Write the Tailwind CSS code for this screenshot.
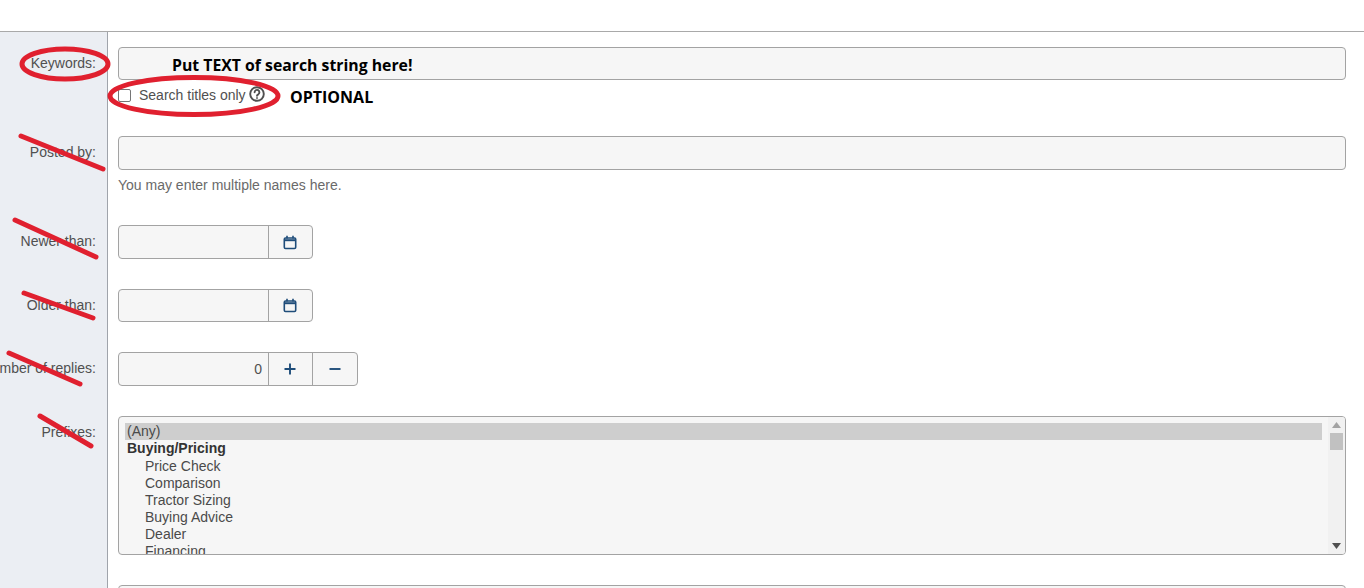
<!DOCTYPE html>
<html>
<head>
<meta charset="utf-8">
<script src="https://cdn.jsdelivr.net/npm/@tailwindcss/browser@4"></script>
</head>
<body class="bg-white font-['Liberation_Sans',Arial,sans-serif] text-[14px] text-[#505050]">
<div class="relative h-[588px] w-[1364px] overflow-hidden">
  <div class="h-[32px] border-b border-[#a9a9a9]"></div>
  <div class="flex h-[556px]">
    <div class="w-[108px] shrink-0 border-r border-[#a0a4ab] bg-[#ebeef3]"></div>
    <div class="min-w-0 flex-1"></div>
  </div>

  <div class="absolute left-0 top-[32px] w-[1346px]">
    <div class="grid grid-cols-[107px_1fr] pt-[15px]">
      <div class="flex justify-end whitespace-nowrap pr-[11px] pt-[8px] leading-[16px]">Keywords:</div>
      <div class="ml-[11px]">
        <div class="h-[33px] rounded-[4px] border border-[#a3a3a3] bg-[#f6f6f6]"></div>
        <label class="mt-[6px] flex h-[18px] items-center">
          <span class="h-[13px] w-[13px] rounded-[2px] border border-[#767676] bg-white"></span>
          <span class="ml-[8px]">Search titles only</span>
          <svg class="ml-[3px] -mt-[2px]" width="16" height="16" viewBox="0 0 16 16" fill="none" stroke="#505050" stroke-width="1.9"><circle cx="8" cy="8" r="6.8"/><path d="M5.6 6.3a2.4 2.4 0 1 1 3.7 2c-.9.5-1.300.9-1.300 1.500" stroke-linecap="round"/><circle cx="8" cy="12" r=".5" fill="#505050" stroke-width="1"/></svg>
        </label>
      </div>
    </div>

    <div class="grid grid-cols-[107px_1fr] pt-[32px]">
      <div class="flex justify-end whitespace-nowrap pr-[11px] pt-[8px] leading-[16px]">Posted by:</div>
      <div class="ml-[11px]">
        <div class="h-[34px] rounded-[4px] border border-[#a3a3a3] bg-[#f6f6f6]"></div>
        <div class="mt-[7px] leading-[16px] text-[#6a6a6a]">You may enter multiple names here.</div>
      </div>
    </div>

    <div class="grid grid-cols-[107px_1fr] pt-[32px]">
      <div class="flex justify-end whitespace-nowrap pr-[11px] pt-[8px] leading-[16px]">Newer than:</div>
      <div class="ml-[11px] flex h-[34px] w-[195px] rounded-[4px] border border-[#a3a3a3] bg-[#f6f6f6]">
        <div class="w-[150px] border-r border-[#a3a3a3]"></div>
        <div class="flex flex-1 items-center justify-center pr-[2px]">
          <svg width="14" height="15" viewBox="0 0 14 15" fill="none" stroke="#1f4d7a" stroke-width="1.6"><rect x="1.3" y="3" width="11.4" height="10.500" rx="1.200"/><path d="M1.300 5.200h11.400" stroke-width="2"/><path d="M4 .8v2.600M10 .8v2.600"/></svg>
        </div>
      </div>
    </div>

    <div class="grid grid-cols-[107px_1fr] pt-[30px]">
      <div class="flex justify-end whitespace-nowrap pr-[11px] pt-[8px] leading-[16px]">Older than:</div>
      <div class="ml-[11px] flex h-[33px] w-[195px] rounded-[4px] border border-[#a3a3a3] bg-[#f6f6f6]">
        <div class="w-[150px] border-r border-[#a3a3a3]"></div>
        <div class="flex flex-1 items-center justify-center pr-[2px]">
          <svg width="14" height="15" viewBox="0 0 14 15" fill="none" stroke="#1f4d7a" stroke-width="1.6"><rect x="1.3" y="3" width="11.4" height="10.500" rx="1.200"/><path d="M1.300 5.200h11.400" stroke-width="2"/><path d="M4 .8v2.600M10 .8v2.600"/></svg>
        </div>
      </div>
    </div>

    <div class="grid grid-cols-[107px_1fr] pt-[30px]">
      <div class="flex justify-end whitespace-nowrap pr-[11px] pt-[8px] leading-[16px]">Number of replies:</div>
      <div class="ml-[11px] flex h-[34px] w-[240px] rounded-[4px] border border-[#a3a3a3] bg-[#f6f6f6]">
        <div class="flex w-[150px] items-center justify-end border-r border-[#a3a3a3] pr-[6px]">0</div>
        <div class="flex w-[44px] items-center justify-center border-r border-[#a3a3a3] pr-[2px]">
          <svg width="12" height="12" viewBox="0 0 12 12" stroke="#1f4d7a" stroke-width="1.9"><path d="M6 .5v11M.5 6h11"/></svg>
        </div>
        <div class="flex flex-1 items-center justify-center">
          <svg width="12" height="12" viewBox="0 0 12 12" stroke="#1f4d7a" stroke-width="1.9"><path d="M.5 6h11"/></svg>
        </div>
      </div>
    </div>

    <div class="grid grid-cols-[107px_1fr] pt-[30px]">
      <div class="flex justify-end whitespace-nowrap pr-[11px] pt-[8px] leading-[16px]">Prefixes:</div>
      <div class="ml-[11px] flex h-[139px] overflow-hidden rounded-[4px] border border-[#a3a3a3] bg-[#f6f6f6]">
        <div class="min-w-0 flex-1 overflow-hidden pl-[6px] pr-[6px] pt-[6px] leading-[17px] text-[#4a4a4a]">
          <div class="bg-[#cecece] pl-[2px]">(Any)</div>
          <div class="pl-[2px] font-bold text-[#333]">Buying/Pricing</div>
          <div class="pl-[20px] pt-[1px]">Price Check</div>
          <div class="pl-[20px]">Comparison</div>
          <div class="pl-[20px]">Tractor Sizing</div>
          <div class="pl-[20px]">Buying Advice</div>
          <div class="pl-[20px]">Dealer</div>
          <div class="pl-[20px]">Financing</div>
        </div>
        <div class="flex w-[17px] shrink-0 flex-col items-center bg-[#f1f1f1]">
          <svg class="mt-[5px]" width="9" height="6" viewBox="0 0 9 6" fill="#a3a3a3"><path d="M4.5 0 9 6H0z"/></svg>
          <div class="mt-[5px] h-[17px] w-[13px] bg-[#c1c1c1]"></div>
          <div class="flex-1"></div>
          <svg class="mb-[5px]" width="9" height="6" viewBox="0 0 9 6" fill="#505050"><path d="M0 0h9L4.500 6z"/></svg>
        </div>
      </div>
    </div>

    <div class="ml-[118px] mt-[30px] h-[34px] rounded-[4px] border border-[#a3a3a3] bg-[#f6f6f6]"></div>
  </div>

  <div class="absolute left-[172px] top-[54px] whitespace-nowrap font-['Open_Sans',sans-serif] text-[15.800px] font-bold leading-[22px] text-black">Put TEXT of search string here!</div>
  <div class="absolute left-[290px] top-[86px] whitespace-nowrap font-['Open_Sans',sans-serif] text-[16px] font-bold leading-[22px] text-black">OPTIONAL</div>

  <svg class="pointer-events-none absolute left-0 top-0" width="1364" height="588" fill="none" stroke="#e0202f" stroke-width="5" stroke-linecap="round">
    <ellipse cx="65" cy="64" rx="43" ry="15" />
    <ellipse cx="194" cy="96" rx="84" ry="18.500" />
    <path d="M21 136 103 169"/>
    <path d="M15 220 96 257"/>
    <path d="M24 293 93 318"/>
    <path d="M9 353 80 384"/>
    <path d="M40 416 91 446"/>
  </svg>
</div>
</body>
</html>
